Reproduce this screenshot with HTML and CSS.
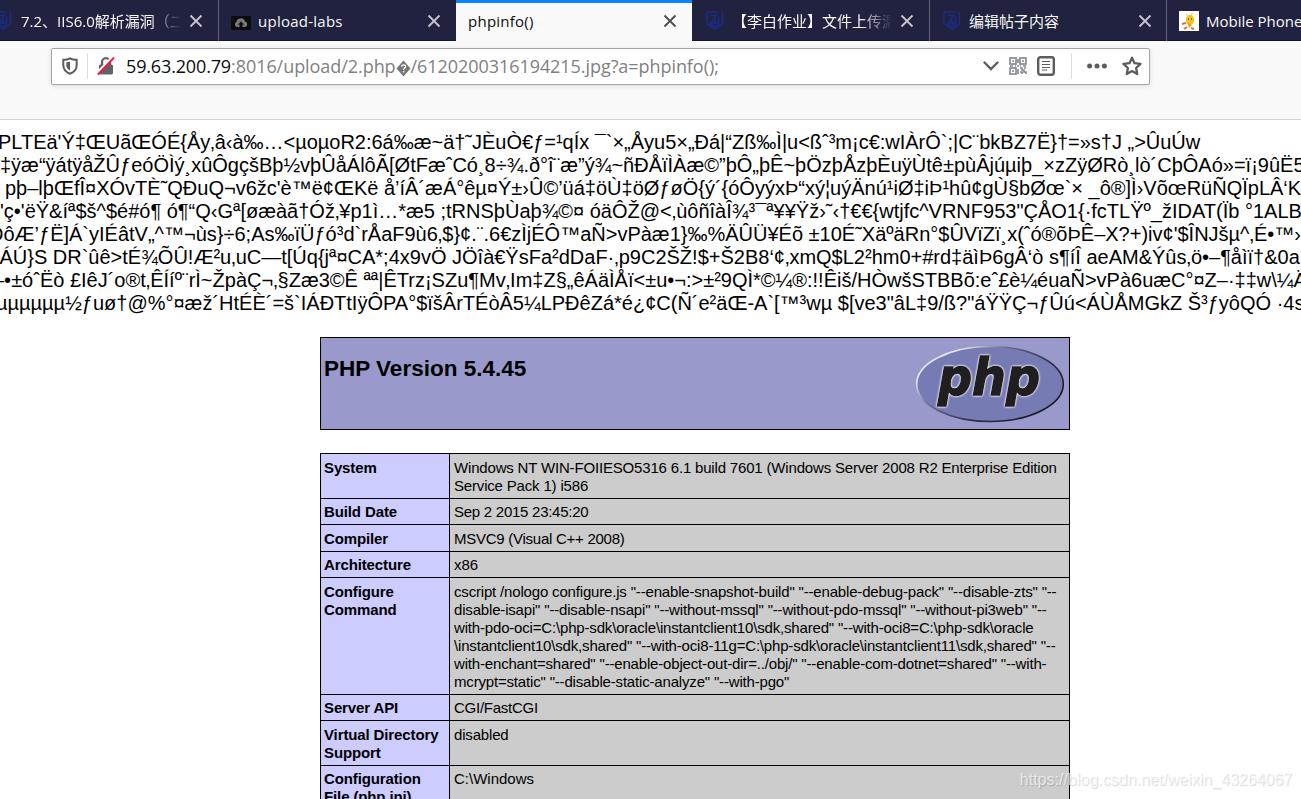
FILE: index.html
```html
<!DOCTYPE html>
<html lang="zh-Hans">
<head>
  <meta charset="UTF-8">
  <title>phpinfo()</title>
  <link rel="stylesheet" href="styles.css">
</head>
<body>
  <svg width="0" height="0" class="defs">
    <symbol id="close" viewBox="0 0 14 14"><path d="M1.500 1.500l11 11M12.500 1.500l-11 11" fill="none" stroke="currentColor" stroke-width="1.800"/></symbol>
    <symbol id="badge" viewBox="0 0 18 19">
      <path d="M1 1h11.500M16.500 1v12l-7.500 5-8-5V1" fill="none" stroke="#1c2b86" stroke-width="1.500"/>
      <path d="M4.500 4.500h6L5 12h7.500V5.500M9 8.500v4M4 13l5 2.500 4.500-2.500" fill="none" stroke="#1c2b86" stroke-width="1.500"/>
    </symbol>
  </svg>

  <div class="tabs">
    <div class="tab tab-first">
      <svg class="fav"><use href="#badge"/></svg>
      <span class="label fade">7.2、IIS6.0解析漏洞（二）</span>
      <svg class="close"><use href="#close"/></svg>
    </div>
    <div class="tab tab-labs">
      <svg class="fav-labs" viewBox="0 0 20 14"><rect width="20" height="14" rx="1.500" fill="#0c0c0e"/><path d="M5.500 11a2.800 2.800 0 0 1-.2-5A4.500 4.500 0 0 1 14 5.500a2.900 2.900 0 0 1 .5 5.500h-3V8.500H13L10 5.500 7 8.500h1.500V11z" fill="#77787c"/></svg>
      <span class="label latin">upload-labs</span>
      <svg class="close"><use href="#close"/></svg>
    </div>
    <div class="tab active">
      <span class="label latin">phpinfo()</span>
      <svg class="close"><use href="#close"/></svg>
    </div>
    <div class="tab tab-work">
      <svg class="fav"><use href="#badge"/></svg>
      <span class="label fade">【李白作业】文件上传漏洞</span>
      <svg class="close"><use href="#close"/></svg>
    </div>
    <div class="tab tab-edit">
      <svg class="fav"><use href="#badge"/></svg>
      <span class="label">编辑帖子内容</span>
      <svg class="close"><use href="#close"/></svg>
    </div>
    <div class="tab tab-phone">
      <svg class="fav-bee" viewBox="0 0 20 20"><rect width="20" height="20" fill="#fff"/><path d="M7 3l3 4M13 2l-2 5" stroke="#e8c25a"/><ellipse cx="11" cy="9" rx="4.200" ry="5" fill="#f0c61c"/><path d="M9 8h1M12 8h1" stroke="#6b4a10" stroke-width="1.500"/><path d="M8 11l5 3-3 3z" fill="#e7a21c"/><path d="M3 13l4-1M5 18l3-2M12 17l3 1" stroke="#e3683a" stroke-width="2"/></svg>
      <span class="label">Mobile Phone</span>
    </div>
  </div>

  <div class="toolbar">
    <div class="urlbar">
      <svg class="shield" viewBox="0 0 16 18"><path d="M8 1.300C10 2.500 12.500 2.900 14.700 2.800V8c0 4-2.700 7.200-6.700 8.700C4 15.200 1.300 12 1.300 8V2.800C3.500 2.900 6 2.500 8 1.300z" fill="none" stroke="#5c5c5f" stroke-width="2"/><path d="M8 4.800v8.700C5.600 12.300 4.300 10.500 4.300 8V5.200C5.600 5.200 6.900 5.100 8 4.800z" fill="#5c5c5f"/></svg>
      <span class="sep"></span>
      <svg class="lock" viewBox="0 0 18 20"><path d="M5 9V6.200a4 4 0 0 1 8 0V9" fill="none" stroke="#626265" stroke-width="2.300"/><rect x="2" y="8.500" width="14" height="10" rx="1.500" fill="#626265"/><path d="M0 17L15.500 1" stroke="#fff" stroke-width="2.500"/><path d="M.8 18.600L17 1.600" stroke="#ff0f3f" stroke-width="2"/></svg>
      <span class="url"><b>59.63.200.79</b>:8016/upload/2.php<svg class="unknown" viewBox="0 0 15 18"><path d="M7.500 1.500L14.500 9.500 7.500 17.500.5 9.500z" fill="#767678"/><path d="M5.600 7.800c0-2.800 4-2.400 3.900-.2 0 1.300-1.900 1.500-1.900 3.200M7.600 12v1.500" fill="none" stroke="#fff" stroke-width="1.300"/></svg>/6120200316194215.jpg?a=phpinfo();</span>
      <svg class="chevron" viewBox="0 0 16 10"><path d="M1.500 1.500L8 8l6.500-6.500" fill="none" stroke="#5c5c5f" stroke-width="2.300" stroke-linecap="round"/></svg>
      <svg class="qr" viewBox="0 0 18 18" fill="none" stroke="#858c95" stroke-width="1.700">
        <rect x="1" y="1" width="6" height="6"/><rect x="11" y="1" width="6" height="6"/><rect x="1" y="11" width="6" height="6"/>
        <path d="M3 4h2M13 4h2M3 14h2M8 9h2M1 9h3M14 9h3M9 2v4M9 12v5M11 11h2v2h2v2h2v2M15 11h2M11 15h2v2M6 9h1M11 9h1"/>
      </svg>
      <svg class="reader" viewBox="0 0 18 20"><rect x="1.200" y="1.200" width="15.600" height="17.600" rx="2.200" fill="none" stroke="#5c5c5f" stroke-width="2.400"/><path d="M5 5.500h8M5 8.500h8M5 11.500h8M5 14h5" stroke="#5c5c5f" stroke-width="1.200"/></svg>
      <span class="sep sep-right"></span>
      <svg class="dots" viewBox="0 0 20 6" fill="#5c5c5f"><circle cx="2.600" cy="3" r="2.500"/><circle cx="10" cy="3" r="2.500"/><circle cx="17.400" cy="3" r="2.500"/></svg>
      <svg class="star" viewBox="0 0 20 20"><path d="M10 1.700l2.500 5.500 6 .7-4.400 4.100 1.100 6-5.200-2.900L4.800 18l1.100-6L1.500 7.900l6-.7z" fill="none" stroke="#5c5c5f" stroke-width="2.300" stroke-linejoin="round"/></svg>
    </div>
  </div>

  <div class="page">
    <div class="raw">
      <p class="l1">PLTEä'Ý‡ŒUãŒÓÉ{Åy‚â‹à‰…&lt;µoµoR2:6á‰æ~ä†˜JÈuÒ€ƒ=¹qÍx ¯`×„Åyu5×„Ðá|“Zß‰Ì|u&lt;ßˆ³m¡c€:wIÀrÔ`;|C¨bkBZ7Ë}†=»s†J „&gt;ÛuÚw</p>
      <p class="l2">‡ÿæ“ÿátÿåŽÛƒeóÖÌý¸xûÔgçšBþ½vþÛåÁlôÃ[ØtFæˆCó¸8÷¾.ð°î¨æ”ý¾~ñÐÅïÌÀæ©”þÔ„þÊ~þÖzþÅzþÈuÿÙtê±pùÂjúµiþ_×zZÿØRò¸lò´CþÔAó»=ï¡9ûË5</p>
      <p class="l3">pþ–lþŒfÎ¤XÓvTÈ˜QÐuQ¬v6žc'è™ë¢ŒKë å’íÂ´æÁ°êµ¤Ý±›Û©’üá‡öÙ‡öØƒøÖ{ý´{óÔyýxÞ“xý¦uýÄnú¹iØ‡iÞ¹hû¢gÙ§bØœ`× _ô®]Ì›VõœRüÑQÏpLÂ‘K</p>
      <p class="l4">'ç•'ëŸ&amp;íª$š^$é#ó¶ ó¶“Q‹Gª[øæàã†Óž‚¥p1ì…*æ5 ;tRNSþÙaþ¾©¤ óäÔŽ@&lt;‚ùôñîàÎ¾³¯ª¥¥Ÿž›˜‹†€€{wtjfc^VRNF953"ÇÅO1{·fcTLŸº_žIDAT(Ïb °1ALB</p>
      <p class="l5">ÐôÆ’ƒË]Á`yIÉâtV„^™¬ùs}÷6;As‰ïÜƒó³d`rÅaF9ù6‚$}¢.¨.6€zÌjÉÔ™aÑ&gt;vPàæ1}‰%ÄÛÜ¥Éõ ±10É˜XäºäRn°$ÛVïZï¸x(ˆó®õÞÊ–X?+)iv¢'$ÎNJšµ^‚É•™›</p>
      <p class="l6">‚ÁÚ}S DR`ûê&gt;tÉ¾ÕÛ!Æ²u‚uC—t[Úq{jª¤CA*;4x9vÖ JÖîà€ŸsFa²dDaF·‚p9C2ŠŽ!$+Š2B8‘¢‚xmQ$L2²hm0+#rd‡äìÞ6gÂ‘ò s¶íÎ aeAM&amp;Ýûs‚ö•–¶åìï†&amp;0a</p>
      <p class="l7">–•±óˆËò £IêJ´o®t‚ÊÍíº¨rÌ~ŽpàÇ¬‚§Zæ3©Ê ªª|ÊTrz¡SZu¶Mv‚Im‡Z§„êÁäÌÅï&lt;±u•¬:&gt;±²9QÌ*©¼®:!!Êiš/HÒwšSTBBõ:eˆ£è¼éuaÑ&gt;vPà6uæC°¤Z–·‡‡w\¼Ä</p>
      <p class="l8">µµµµµµ½ƒuø†@%°¤æž´HtÉÈ´=š`IÁÐTtIÿÔPA°$ïšÂrTÉòÂ5¼LPÐêZá*é¿¢C(Ñ´e²äŒ-A`[™³wµ $[ve3"âL‡9/ß?"áŸŸÇ¬ƒÛú&lt;ÁÙÅMGkZ Š³ƒyôQÓ ·4s</p>
    </div>

    <div class="header">
      <h1>PHP Version 5.4.45</h1>
      <svg class="logo" width="150" height="78" viewBox="0 0 150 78">
        <defs>
          <linearGradient id="rim" x1="0" y1="0" x2="1" y2=".7">
            <stop offset="0" stop-color="#b0b2dc"/><stop offset=".2" stop-color="#eeeef8"/><stop offset=".42" stop-color="#6a6b8c"/><stop offset=".7" stop-color="#33334a"/><stop offset="1" stop-color="#15151c"/>
          </linearGradient>
        </defs>
        <ellipse cx="75" cy="38" rx="73.300" ry="37.500" fill="#777bb3" stroke="url(#rim)" stroke-width="1.600"/>
        <text x="23" y="49" textLength="102" lengthAdjust="spacingAndGlyphs" class="logo-text">php</text>
      </svg>
    </div>

    <table class="info">
      <tr class="two"><th>System</th><td>Windows NT WIN-FOIIESO5316 6.1 build 7601 (Windows Server 2008 R2 Enterprise Edition<br>Service Pack 1) i586</td></tr>
      <tr class="r26"><th>Build Date</th><td class="tight">Sep 2 2015 23:45:20</td></tr>
      <tr class="r27"><th>Compiler</th><td class="tight">MSVC9 (Visual C++ 2008)</td></tr>
      <tr class="r26"><th>Architecture</th><td class="loose">x86</td></tr>
      <tr class="six"><th>Configure<br>Command</th><td>cscript /nologo configure.js "--enable-snapshot-build" "--enable-debug-pack" "--disable-zts" "--<br>disable-isapi" "--disable-nsapi" "--without-mssql" "--without-pdo-mssql" "--without-pi3web" "--<br>with-pdo-oci=C:\php-sdk\oracle\instantclient10\sdk,shared" "--with-oci8=C:\php-sdk\oracle<br>\instantclient10\sdk,shared" "--with-oci8-11g=C:\php-sdk\oracle\instantclient11\sdk,shared" "--<br>with-enchant=shared" "--enable-object-out-dir=../obj/" "--enable-com-dotnet=shared" "--with-<br>mcrypt=static" "--disable-static-analyze" "--with-pgo"</td></tr>
      <tr class="r26"><th>Server API</th><td class="tight">CGI/FastCGI</td></tr>
      <tr class="two"><th>Virtual Directory<br>Support</th><td>disabled</td></tr>
      <tr class="last"><th>Configuration<br>File (php.ini)<br>Path</th><td class="loose">C:\Windows</td></tr>
    </table>
  </div>
  <div class="watermark">https://blog.csdn.net/weixin_43264067</div>
</body>
</html>
```
FILE: styles.css
```css
* {
  box-sizing: border-box;
}
body {
  margin: 0;
  height: 799px;
  overflow: hidden;
  position: relative;
  background: #fff;
  color: #000;
  font-family: "Liberation Sans", Arial, sans-serif;
}
svg {
  display: block;
  flex: none;
}
.defs {
  position: absolute;
}

/* tab strip */
.tabs {
  display: flex;
  width: 1301px;
  height: 41px;
  overflow: hidden;
  background: linear-gradient(#20223f 40px, #121330 40px);
  color: #f9f9fa;
  font: 15px/20px "Open Sans", "Noto Sans CJK SC", sans-serif;
}
.tab {
  display: flex;
  align-items: center;
  flex: none;
  width: 237px;
  height: 41px;
  padding: 0 15px 0 12px;
  border-right: 1px solid #62637a;
}
.tab-first {
  width: 219px;
  padding-left: 0;
}
.tab-first .fav {
  margin-left: -6px;
}
.tab-labs {
  border-right: 0;
}
.active {
  width: 236px;
  background: #f9f9fa;
  color: #0c0c0d;
  border-top: 3px solid #0a84ff;
  border-right: 0;
  padding-bottom: 3px;
}
.tab-work {
  width: 238px;
  padding-left: 14px;
}
.tab-edit {
  padding-left: 13px;
  padding-right: 14px;
}
.label {
  flex: 1;
  min-width: 0;
  overflow: hidden;
  white-space: nowrap;
}
.latin {
  letter-spacing: 0.25px;
}
.fade {
  -webkit-mask-image: linear-gradient(to left, transparent, #000 32px);
  mask-image: linear-gradient(to left, transparent, #000 32px);
}
.fav {
  width: 18px;
  height: 19px;
  margin-right: 9px;
}
.tab-work .fav,
.tab-edit .fav {
  margin-right: 8px;
}
.fav-labs {
  width: 20px;
  height: 14px;
  margin: 5px 7px 0 0;
}
.fav-bee {
  width: 20px;
  height: 20px;
  margin-right: 7px;
}
.close {
  width: 14px;
  height: 14px;
  margin-left: 8px;
  color: #c6c7d0;
}
.active .close {
  color: #4a4a4f;
}

/* address bar */
.toolbar {
  height: 79px;
  padding: 7px 0 0 51px;
  background: #f9f9fa;
  border-bottom: 1px solid #d4d4d6;
}
.urlbar {
  display: flex;
  align-items: center;
  width: 1099px;
  height: 37px;
  padding: 0 7px 2px 10px;
  background: #fff;
  border: 1px solid #a5a5a7;
  border-radius: 2px;
  box-shadow: 0 1px 5px rgba(0,0,0,0.12);
}
.shield {
  width: 16px;
  height: 18px;
}
.sep {
  width: 1px;
  height: 26px;
  margin: 0 9px;
  background: #dededf;
}
.lock {
  width: 18px;
  height: 20px;
}
.url {
  flex: 1;
  margin-left: 11px;
  color: #808083;
  font: 18px/24px "Open Sans", sans-serif;
  letter-spacing: -0.06px;
  white-space: nowrap;
}
.url b {
  color: #0c0c0d;
  font-weight: normal;
  letter-spacing: -0.15px;
}
.unknown {
  display: inline-block;
  width: 15px;
  height: 18px;
  vertical-align: -4px;
}
.chevron {
  width: 16px;
  height: 10px;
}
.qr {
  width: 18px;
  height: 18px;
  margin-left: 10px;
}
.reader {
  width: 18px;
  height: 20px;
  margin-left: 10px;
}
.sep-right {
  margin: 0 15px 0 16px;
}
.dots {
  width: 20px;
  height: 6px;
}
.star {
  width: 20px;
  height: 20px;
  margin-left: 15px;
}

/* page content */
.page {
  overflow: hidden;
}
.raw {
  padding-top: 11px;
  font-size: 20px;
  line-height: 23px;
  white-space: nowrap;
}
.raw p {
  margin: 0;
}
.l1 { text-indent: -2px; letter-spacing: -0.012px; }
.l3 { text-indent: 5px; }
.l5 { text-indent: -11px; }
.l6 { text-indent: -5px; }
.l7 { text-indent: -7px; }
.l8 { text-indent: -4px; }
.header {
  display: flex;
  justify-content: space-between;
  width: 750px;
  height: 93px;
  margin: 22px 0 23px 320px;
  padding: 8px 4px 0 4px;
  background: #9999cc;
  border: 1px solid #000;
}
h1 {
  margin: 10px 0 0 -1px;
  font-size: 22.5px;
  line-height: 26px;
}
.logo-text {
  font: italic bold 51px "DejaVu Sans", sans-serif;
  fill: #211e1f;
  stroke: #211e1f;
  stroke-width: 1.5px;
  filter: drop-shadow(0 0 1px #fff) drop-shadow(0 0 0.6px #fff);
}
.info {
  width: 750px;
  margin-left: 320px;
  border-collapse: collapse;
  table-layout: fixed;
  font-size: 15px;
  line-height: 18px;
}
.info th,
.info td {
  padding: 5px 4px 0;
  border: 1px solid #000;
  text-align: left;
  vertical-align: top;
  white-space: nowrap;
}
.info th {
  width: 129px;
  padding-left: 3px;
  background: #ccccff;
  letter-spacing: -0.12px;
}
.info td {
  background: #cccccc;
  letter-spacing: -0.175px;
}
.info .tight { letter-spacing: -0.26px; }
.info .loose { letter-spacing: 0; }
.two { height: 45px; }
.r26 { height: 26px; }
.r27 { height: 27px; }
.six { height: 117px; }
.info .r26 > *,
.info .last > * {
  padding-top: 4px;
}

.watermark {
  position: absolute;
  right: 9px;
  bottom: 9px;
  color: rgba(255,255,255,0.65);
  font-size: 16px;
  line-height: 20px;
  text-shadow: 1px 1px 1px rgba(0,0,0,0.16);
}
```
